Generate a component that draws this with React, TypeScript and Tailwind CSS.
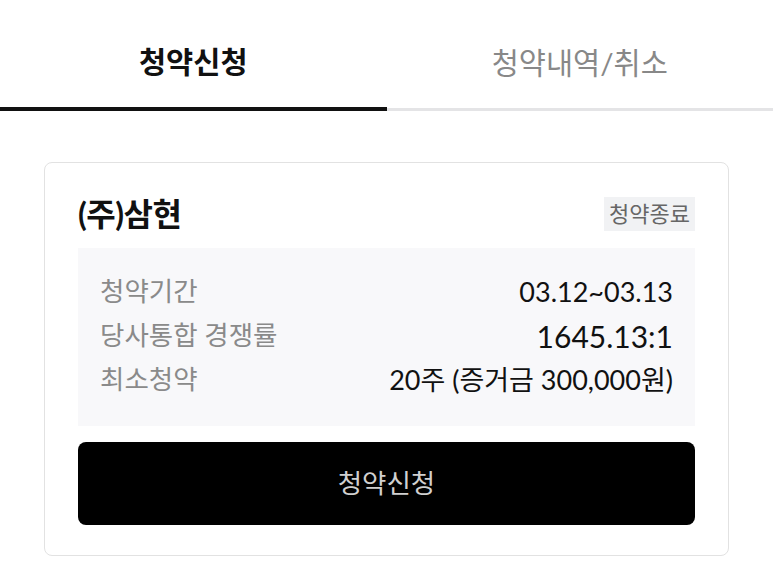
const font = { fontFamily: "Lato, 'Noto Sans CJK KR', sans-serif" };

const rows = [
  { label: "청약기간", value: "03.12~03.13", big: false },
  { label: "당사통합 경쟁률", value: "1645.13:1", big: true },
  { label: "최소청약", value: "20주 (증거금 300,000원)", big: false },
];

export default function App() {
  return (
    <div className="w-[773px] h-[575px] bg-white overflow-hidden" style={font}>
      {/* tabs */}
      <div className="flex">
        <div className="flex-1 h-[111px] flex flex-col">
          <div className="flex-1 flex items-center justify-center pt-[18px] text-[29.5px] font-bold text-[#111]">
            청약신청
          </div>
          <div className="h-[4px] bg-[#111]" />
        </div>
        <div className="flex-1 h-[111px] flex flex-col">
          <div className="flex-1 flex items-center justify-center pt-[18px] text-[29.5px] text-[#888]">
            청약내역/취소
          </div>
          <div className="h-[3px] bg-[#e4e4e6]" />
        </div>
      </div>

      {/* card */}
      <div className="mx-[44px] mt-[51px] border border-[#e2e2e2] rounded-[8px] px-[33px] pt-[33px] pb-[30px]">
        <div className="flex items-center justify-between h-[35px]">
          <div className="text-[32px] font-bold text-[#111] tracking-[-0.5px]">(주)삼현</div>
          <div className="h-[34px] px-[5px] flex items-center bg-[#f1f2f4] text-[22px] text-[#666]">
            청약종료
          </div>
        </div>

        <div className="mt-[17px] bg-[#f8f8fa] pl-[22px] pr-[22px] pt-[22px] pb-[24px]">
          {rows.map((r) => (
            <div key={r.label} className="h-[44px] flex items-center justify-between">
              <span className="text-[26.5px] text-[#8a8a8a]">{r.label}</span>
              <span className={r.big ? "text-[30px] text-[#111]" : "text-[27px] text-[#111]"}>
                {r.value}
              </span>
            </div>
          ))}
        </div>

        <button className="mt-[16px] w-full h-[83px] bg-black rounded-[8px] flex items-center justify-center text-[26.5px] text-[#d0d0d0]">
          청약신청
        </button>
      </div>
    </div>
  );
}
